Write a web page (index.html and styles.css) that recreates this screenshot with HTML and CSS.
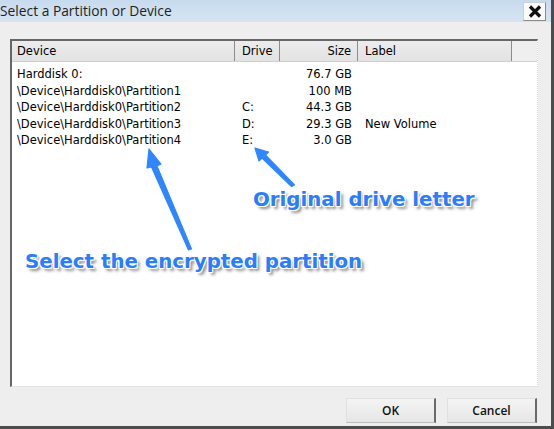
FILE: index.html
```
<!DOCTYPE html>
<html>
<head>
<meta charset="utf-8">
<link rel="stylesheet" href="styles.css">
</head>
<body>
<div class="window">
  <div class="titlebar">
    <span class="title">Select a Partition or Device</span>
    <span class="close"><svg width="14" height="13" viewBox="0 0 14 13"><path d="M2 1.5 L12 11.5 M12 1.5 L2 11.5" stroke="#111" stroke-width="3.2" fill="none"/></svg></span>
  </div>
  <div class="body">
    <div class="listbox">
      <div class="row header">
        <span class="c dev">Device</span>
        <span class="c drv">Drive</span>
        <span class="c size">Size</span>
        <span class="c lbl">Label</span>
        <span class="c rest"></span>
      </div>
      <div class="rows">
        <div class="row"><span class="c dev">Harddisk 0:</span><span class="c drv"></span><span class="c size">76.7 GB</span><span class="c lbl"></span></div>
        <div class="row"><span class="c dev">\Device\Harddisk0\Partition1</span><span class="c drv"></span><span class="c size">100 MB</span><span class="c lbl"></span></div>
        <div class="row"><span class="c dev">\Device\Harddisk0\Partition2</span><span class="c drv">C:</span><span class="c size">44.3 GB</span><span class="c lbl"></span></div>
        <div class="row"><span class="c dev">\Device\Harddisk0\Partition3</span><span class="c drv">D:</span><span class="c size">29.3 GB</span><span class="c lbl">New Volume</span></div>
        <div class="row"><span class="c dev">\Device\Harddisk0\Partition4</span><span class="c drv">E:</span><span class="c size">3.0 GB</span><span class="c lbl"></span></div>
      </div>
    </div>
    <div class="buttons">
      <button class="btn">OK</button>
      <button class="btn">Cancel</button>
    </div>
  </div>
  <svg class="arrows" width="554" height="429" viewBox="0 0 554 429">
    <g fill="#2f86ff" stroke="#2f86ff" stroke-linejoin="round">
      <polygon points="188.5,250 191.5,249 157,166 161,164 149,149 147,168 151.5,167" stroke-width="1.2"/>
      <polygon points="291.5,186.5 294.5,185 265.5,155 268.5,152 255,148 259,161 262,158" stroke-width="1.2"/>
    </g>
  </svg>
  <div class="note note1">Original drive letter</div>
  <div class="note note2">Select the encrypted partition</div>
</div>
</body>
</html>
```
FILE: styles.css
```
html, body {
  margin: 0;
  padding: 0;
  background: #ffffff;
}
.window {
  position: relative;
  width: 551px;
  height: 426px;
  background: #eeeeee;
  border-right: 3px solid #4c4c4c;
  border-bottom: 3px solid #4c4c4c;
  display: flex;
  flex-direction: column;
  font-family: "DejaVu Sans", sans-serif;
  color: #000;
  overflow: hidden;
}
.titlebar {
  height: 22px;
  background: linear-gradient(#c7dbee, #d6e4f2);
  display: flex;
  align-items: center;
  justify-content: space-between;
  padding: 0 5px 0 0;
}
.title {
  font-family: "Open Sans", sans-serif;
  font-size: 13.8px;
  color: #1f1f1f;
  margin-top: -1px;
}
.close {
  width: 21px;
  height: 17px;
  background: #fafafa;
  border: 1px solid #d0d0d0;
  border-right-color: #8a8a8a;
  border-bottom-color: #8a8a8a;
  display: flex;
  align-items: center;
  justify-content: center;
  margin-top: 1px;
}
.body {
  flex: 1;
  display: flex;
  flex-direction: column;
  padding: 17px 12px 0 10px;
}
.listbox {
  width: 525px;
  height: 345px;
  background: #fff;
  border-top: 2px solid #666;
  border-left: 2px solid #666;
  border-right: 1px dotted #d8d8d8;
  border-bottom: 1px solid #e4e4e4;
  font-size: 11.5px;
}
.row {
  display: grid;
  grid-template-columns: 223px 45px 78px 154px 1fr;
  height: 16.5px;
  line-height: 16.5px;
}
.header {
  height: 20px;
  line-height: 20px;
  background: linear-gradient(#ececec, #e2e2e2);
  border-bottom: 1px solid #cfcfcf;
}
.header .c {
  border-right: 1px solid #8c8c8c;
}
.header .rest {
  border-right: none;
  background: #efefef;
}
.c {
  padding: 0 6px;
  white-space: nowrap;
}
.dev { padding-left: 5px; }
.drv { padding-left: 7px; }
.size { text-align: right; padding-right: 6px; }
.lbl { padding-left: 7px; }
.rows {
  padding-top: 4px;
}
.buttons {
  display: flex;
  justify-content: flex-end;
  gap: 11px;
  margin-top: 11px;
  padding-right: 2px;
}
.btn {
  width: 90px;
  height: 25px;
  background: linear-gradient(#f4f4f4, #e6e6e6);
  border: 1px solid #e0e0e0;
  border-right: 2px solid #6a6a6a;
  border-bottom: 1px solid #bdbdbd;
  font-family: "Open Sans", sans-serif;
  font-size: 12px;
  font-weight: 600;
  color: #111;
  padding: 0;
}
.arrows {
  position: absolute;
  left: 0;
  top: 0;
  pointer-events: none;
}
.note {
  position: absolute;
  font-family: "DejaVu Sans", sans-serif;
  font-weight: bold;
  font-size: 19.8px;
  color: #2a7dfd;
  white-space: nowrap;
  text-shadow: 0 0 2px #fff, 1px 1px 0 #fff, -1px -1px 0 #fff, 1px -1px 0 #fff, -1px 1px 0 #fff, 3px 3px 3px rgba(0,0,0,0.45);
}
.note1 {
  left: 253px;
  top: 188px;
}
.note2 {
  left: 25px;
  top: 250px;
}
```
